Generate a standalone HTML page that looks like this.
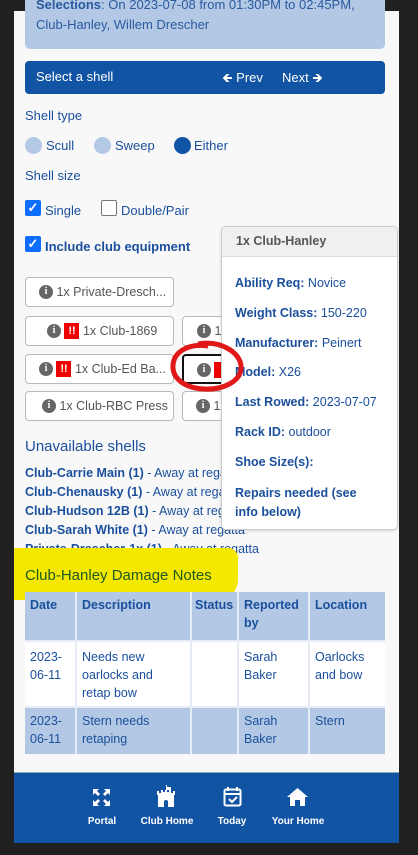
<!DOCTYPE html>
<html><head><meta charset="utf-8"><style>
*{margin:0;padding:0;box-sizing:border-box}
body{width:418px;height:855px;background:#202020;position:relative;overflow:hidden;font-family:"Liberation Sans",sans-serif;color:#1a4f9c;font-size:13px}
.a{position:absolute;white-space:nowrap}
#page{position:absolute;left:14px;top:11px;width:385px;height:832px;background:#f8f8f8}
.btn{position:absolute;height:30px;border:1px solid #b8b8b8;border-radius:4px;background:#fff;color:#555;font-size:12.5px;line-height:28px;white-space:nowrap;overflow:hidden}
.i{display:inline-block;width:14px;height:14px;border-radius:50%;background:#666;color:#fff;font:bold 10px/14px "Liberation Serif",serif;text-align:center;vertical-align:middle;margin-top:-2px}
.x{display:inline-block;width:15px;height:16px;background:#e00;color:#fff;font:bold 11px/16px "Liberation Sans",sans-serif;text-align:center;vertical-align:middle;margin-top:-2px}
td,th{border-right:2px solid #e6ecf5;vertical-align:top;padding:4px 5px;text-align:left;font-size:12.5px;line-height:18px;overflow:hidden}
th{font-weight:bold}
.fi{position:absolute;top:788px;color:#fff}
.fl{position:absolute;top:816px;color:#fff;font-size:10px;font-weight:bold;text-align:center}
</style></head><body>
<div id="page"></div>
<div class="a" style="left:25px;top:0;width:360px;height:49px;background:#b3c8e4;border-radius:0 0 5px 5px"></div>
<div class="a" style="left:36px;top:-5px;font-size:13px;color:#2a5aa0;line-height:20px"><b>Selections</b>: On 2023-07-08 from 01:30PM to 02:45PM,<br>Club-Hanley, Willem Drescher</div>
<div class="a" style="left:25px;top:61px;width:360px;height:33px;background:#1254a4;border-radius:4px"></div>
<div class="a" style="left:36px;top:69px;color:#fff;font-size:13px">Select a shell</div>
<div class="a" style="left:222px;top:69px;color:#fff;font-size:13px">🡸 Prev</div>
<div class="a" style="left:282px;top:69px;color:#fff;font-size:13px">Next 🡺</div>
<div class="a" style="left:25px;top:108px">Shell type</div>
<div class="a" style="left:25px;top:137px;width:17px;height:17px;border-radius:50%;background:#b3c8e4"></div>
<div class="a" style="left:46px;top:138px">Scull</div>
<div class="a" style="left:94px;top:137px;width:17px;height:17px;border-radius:50%;background:#b3c8e4"></div>
<div class="a" style="left:115px;top:138px">Sweep</div>
<div class="a" style="left:174px;top:137px;width:17px;height:17px;border-radius:50%;background:#1254a4"></div>
<div class="a" style="left:194px;top:138px">Either</div>
<div class="a" style="left:25px;top:168px">Shell size</div>
<div class="a" style="left:25px;top:200px;width:16px;height:16px;border-radius:2px;background:#0d6efd;color:#fff;font-size:13px;line-height:16px;text-align:center;font-weight:bold">✓</div>
<div class="a" style="left:45px;top:203px">Single</div>
<div class="a" style="left:101px;top:200px;width:16px;height:16px;border-radius:2px;border:1px solid #777;background:#fff"></div>
<div class="a" style="left:121px;top:203px">Double/Pair</div>
<div class="a" style="left:25px;top:236px;width:16px;height:16px;border-radius:2px;background:#0d6efd;color:#fff;font-size:13px;line-height:16px;text-align:center;font-weight:bold">✓</div>
<div class="a" style="left:45px;top:239px;font-weight:bold">Include club equipment</div>

<div class="btn" style="left:25px;top:277px;width:149px;padding-left:13px"><span class="i">i</span> 1x Private-Dresch...</div>
<div class="btn" style="left:25px;top:316px;width:149px;padding-left:21px"><span class="i">i</span> <span class="x">!!</span> 1x Club-1869</div>
<div class="btn" style="left:182px;top:316px;width:60px;padding-left:14px"><span class="i">i</span> 1x</div>
<div class="btn" style="left:25px;top:354px;width:149px;padding-left:13px"><span class="i">i</span> <span class="x">!!</span> 1x Club-Ed Ba...</div>
<div class="btn" style="left:182px;top:354px;width:60px;padding-left:13px;border:2px solid #111"><span class="i">i</span> <span class="x" style="width:9px">&nbsp;</span></div>
<div class="btn" style="left:25px;top:391px;width:149px;padding-left:16px"><span class="i">i</span> 1x Club-RBC Press</div>
<div class="btn" style="left:182px;top:391px;width:60px;padding-left:13px"><span class="i">i</span> 1x</div>

<div class="a" style="left:25px;top:438px;font-size:15px">Unavailable shells</div>
<div class="a" style="left:25px;top:464px;font-size:12.5px;line-height:19px"><b>Club-Carrie Main (1)</b> - Away at regatta<br><b>Club-Chenausky (1)</b> - Away at regatta<br><b>Club-Hudson 12B (1)</b> - Away at regatta<br><b>Club-Sarah White (1)</b> - Away at regatta<br><b>Private-Drescher-1x (1)</b> - Away at regatta</div>

<div class="a" style="left:221px;top:226px;width:177px;height:304px;background:#fff;border:1px solid #ccc;border-radius:5px;box-shadow:0 1px 3px rgba(0,0,0,.15);overflow:hidden">
 <div style="height:30px;background:#f0f0f0;border-bottom:1px solid #ddd;padding:7px 14px;font-weight:bold;color:#555;font-size:12.5px">1x Club-Hanley</div>
</div>
<div class="a" style="left:235px;top:269px;font-size:12.5px;line-height:29.8px"><b>Ability Req:</b> Novice<br><b>Weight Class:</b> 150-220<br><b>Manufacturer:</b> Peinert<br><b>Model:</b> X26<br><b>Last Rowed:</b> 2023-07-07<br><b>Rack ID:</b> outdoor<br><b>Shoe Size(s):</b></div>
<div class="a" style="left:235px;top:484px;font-size:12.5px;line-height:19px;font-weight:bold">Repairs needed (see<br>info below)</div>

<svg class="a" style="left:168px;top:338px" width="80" height="58"><path d="M30 6 C 52 2, 72 14, 73 28 C 74 44, 54 52, 36 51 C 16 50, 4 40, 5 27 C 6 14, 20 5, 40 8" fill="none" stroke="#e01818" stroke-width="5"/></svg>

<div class="a" style="left:14px;top:548px;width:224px;height:52px;background:#f5e800;border-radius:0 10px 20px 0"></div>
<div class="a" style="left:25px;top:567px;font-size:15px;color:#1d5a20">Club-Hanley Damage Notes</div>
<table class="a" style="left:25px;top:592px;width:360px;border-collapse:collapse;color:#1a4f9c;table-layout:fixed;white-space:normal">
<colgroup><col style="width:51px"><col style="width:115px"><col style="width:47px"><col style="width:71px"><col style="width:76px"></colgroup>
<tr style="background:#b3c8e4;height:49px"><th>Date</th><th>Description</th><th style="padding-left:3px">Status</th><th>Reported by</th><th style="border:none">Location</th></tr>
<tr style="background:#fff;height:65px;border-top:2px solid #e6ecf5"><td style="padding-top:6px">2023-<br>06-11</td><td style="padding-top:6px">Needs new<br>oarlocks and<br>retap bow</td><td></td><td style="padding-top:6px">Sarah<br>Baker</td><td style="border:none;padding-top:6px">Oarlocks<br>and bow</td></tr>
<tr style="background:#b3c8e4;height:47px;border-top:2px solid #e6ecf5"><td>2023-<br>06-11</td><td>Stern needs<br>retaping</td><td></td><td>Sarah<br>Baker</td><td style="border:none">Stern</td></tr>
</table>

<div class="a" style="left:14px;top:772px;width:385px;height:71px;background:#1254a4;border-top:1px solid #8aa"></div>
<svg class="fi" style="left:92px" width="19" height="19" viewBox="0 0 19 19" fill="#fff"><path d="M1 1h6l-2 2 3 3-2 2-3-3-2 2zM18 1v6l-2-2-3 3-2-2 3-3-2-2zM1 18v-6l2 2 3-3 2 2-3 3 2 2zM18 18h-6l2-2-3-3 2-2 3 3 2-2z"/></svg>
<svg class="fi" style="left:155px;top:785px" width="24" height="22" viewBox="0 0 24 22" fill="#fff"><path d="M11 0h1v2h4v3h-4v2h2v-2h2v3h2v-2h2v4h-1v12h-6v-5a2 2 0 0 0-4 0v5H3V10H2V6h2v2h2V5h2v2h2V5h1z"/></svg>
<svg class="fi" style="left:223px;top:786px" width="19" height="21" viewBox="0 0 19 21" fill="none" stroke="#fff" stroke-width="2"><rect x="1.5" y="3.5" width="16" height="16" rx="1.5"/><path d="M1.5 8h16M5 1v4M14 1v4M6 13l3 3 5-5"/></svg>
<svg class="fi" style="left:287px" width="21" height="18" viewBox="0 0 21 18" fill="#fff"><path d="M10.5 0L21 9h-3v9h-5v-6H8v6H3V9H0z"/></svg>
<div class="fl" style="left:82px;width:40px">Portal</div>
<div class="fl" style="left:137px;width:60px">Club Home</div>
<div class="fl" style="left:212px;width:40px">Today</div>
<div class="fl" style="left:267px;width:62px">Your Home</div>
</body></html>
